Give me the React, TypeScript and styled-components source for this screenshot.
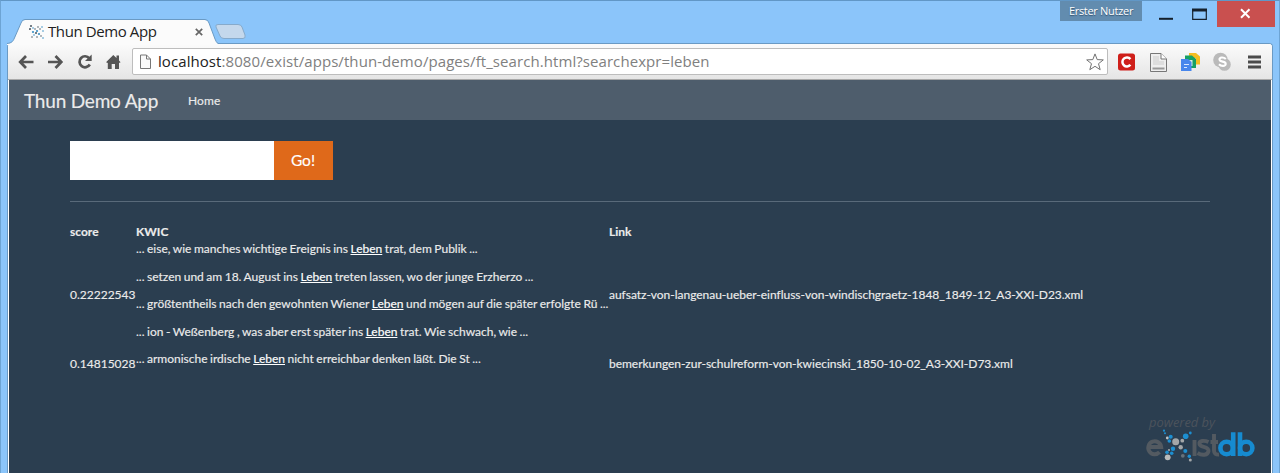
import React from 'react';
import styled, { createGlobalStyle } from 'styled-components';

const GlobalStyle = createGlobalStyle`
  * { box-sizing: border-box; }
  body { margin: 0; overflow: hidden; background: #8bc5fa; }
`;

const Window = styled.div`
  width: 1280px;
  height: 473px;
  display: flex;
  flex-direction: column;
  background: #8bc5fa;
  border-top: 1px solid #6197c6;
  border-left: 1px solid #6da4d4;
  border-right: 1px solid #6da4d4;
  font-family: 'Open Sans', sans-serif;
`;

const TitleBar = styled.header`
  height: 42px;
  flex: none;
  display: flex;
  justify-content: space-between;
  align-items: flex-start;
`;

const TabStrip = styled.div`
  display: flex;
  padding: 18px 0 0 6px;
`;

const Tab = styled.div`
  position: relative;
  width: 211px;
  height: 26px;
  display: flex;
  align-items: center;
  padding-left: 22px;
`;

const TabShape = styled.svg`
  position: absolute;
  left: 0;
  top: 0;
`;

const TabContent = styled.div`
  position: relative;
  display: flex;
  align-items: center;
  width: 176px;
  svg { flex: none; }
`;

const TabTitle = styled.span`
  margin-left: 3px;
  width: 147px;
  color: #222;
  font-size: 15px;
  line-height: 20px;
  letter-spacing: -0.4px;
  padding-bottom: 2px;
  white-space: nowrap;
`;

const NewTab = styled.svg`
  margin: 4px 0 0 -4px;
`;

const Controls = styled.div`
  display: flex;
`;

const UserBadge = styled.span`
  width: 82px;
  height: 20px;
  background: #628caf;
  color: #fff;
  font-size: 11px;
  line-height: 20px;
  text-align: center;
  letter-spacing: -0.3px;
  text-shadow: 0 1px 1px #35536f;
`;

const WindowButtons = styled.svg`
  display: block;
`;

const Frame = styled.div`
  flex: 1;
  min-height: 0;
  margin: 0 6px;
  display: flex;
  flex-direction: column;
  border: 1px solid #6a9ac4;
  border-bottom: 0;
  border-radius: 4px 4px 0 0;
  background: #fff;
  overflow: hidden;
`;

const Toolbar = styled.div`
  height: 36px;
  flex: none;
  display: flex;
  align-items: center;
  background: linear-gradient(#fbfbfb, #e5e5e5);
  border-bottom: 1px solid #a9a9a9;
`;

const NavIcons = styled.svg`
  width: 124px;
  height: 34px;
  flex: none;
`;

const AddressBar = styled.div`
  width: 976px;
  height: 27px;
  display: flex;
  align-items: center;
  flex: none;
  background: #fff;
  border: 1px solid #bdbdbd;
  border-radius: 2px;
  padding: 0 3px 0 6px;
`;

const Url = styled.span`
  flex: 1;
  margin-left: 6px;
  padding-bottom: 2px;
  color: #808080;
  font-size: 15px;
  line-height: 22px;
  letter-spacing: 0.075px;
  white-space: nowrap;
  b { color: #222; font-weight: 400; }
`;

const Extensions = styled.svg`
  width: 156px;
  height: 34px;
  flex: none;
`;

const Page = styled.div`
  flex: 1;
  min-height: 0;
  margin: 0 1px;
  display: flex;
  flex-direction: column;
  background: #2b3e50;
  color: #ebebeb;
  font-family: Lato, sans-serif;
  font-size: 12px;
  line-height: 1.42857;
  font-variant-ligatures: none;
  -webkit-text-stroke: 0.15px;
`;

const Navbar = styled.nav`
  height: 40px;
  flex: none;
  display: flex;
  align-items: center;
  background: #4e5d6c;
  padding: 2px 0 0 15px;
`;

const Brand = styled.a`
  width: 164px;
  font-size: 19px;
  line-height: 21px;
  padding-bottom: 2px;
  letter-spacing: -0.2px;
`;

const NavLink = styled.a`
  font-size: 12px;
  letter-spacing: 0.1px;
`;

const Main = styled.main`
  padding: 21px 61px 0;
`;

const SearchForm = styled.form`
  display: flex;
  height: 39px;
`;

const SearchInput = styled.input`
  width: 204px;
  border: 0;
  background: #fff;
`;

const GoButton = styled.button`
  width: 59px;
  border: 0;
  padding: 0 1px 1px 0;
  background: #df691a;
  color: #fff;
  font: 15.5px Lato, sans-serif;
`;

const Rule = styled.hr`
  margin: 21px 0;
  border: 0;
  border-top: 1px solid #596a7a;
`;

const Results = styled.table`
  border-collapse: collapse;
  table-layout: fixed;
  width: 1140px;
  td, th { padding: 0; text-align: left; white-space: nowrap; }
`;

const Col = styled.col<{ $w: number }>`
  width: ${(p) => p.$w}px;
`;

const Cell = styled.td`
  && { padding-bottom: 1px; }
`;

const Snippet = styled.p`
  margin: 0 0 10.35px;
  word-spacing: -0.55px;
  a { color: #fff; text-decoration: underline; }
`;

const DocumentLink = styled.a`
  letter-spacing: -0.025px;
`;

const Footer = styled.footer`
  margin-top: auto;
  display: flex;
  justify-content: flex-end;
  padding: 0 16px 8px 0;
`;

const Logo = styled.svg`
  overflow: visible;
  font-family: 'Open Sans', sans-serif;
`;

type Hit = [before: string, after: string];
const results: { score: string; link: string; hits: Hit[] }[] = [
  {
    score: '0.22222543',
    link: 'aufsatz-von-langenau-ueber-einfluss-von-windischgraetz-1848_1849-12_A3-XXI-D23.xml',
    hits: [
      ['eise, wie manches wichtige Ereignis ins', 'trat, dem Publik'],
      ['setzen und am 18. August ins', 'treten lassen, wo der junge Erzherzo'],
      ['größtentheils nach den gewohnten Wiener', 'und mögen auf die später erfolgte Rü'],
      ['ion - Weßenberg , was aber erst später ins', 'trat. Wie schwach, wie'],
    ],
  },
  {
    score: '0.14815028',
    link: 'bemerkungen-zur-schulreform-von-kwiecinski_1850-10-02_A3-XXI-D73.xml',
    hits: [['armonische irdische', 'nicht erreichbar denken läßt. Die St']],
  },
];

const G = '#a3a7a9';
const B = '#1d8fd1';
const dots: [number, number, number, string][] = [
  [17, 13.7, 1.1, B], [18, 16.3, 1, B], [23.7, 19.7, 2, B], [20.3, 21, 1.4, '#c0c4c6'],
  [22.3, 24, 1.8, B], [28.7, 24.7, 3.5, G], [35.3, 23.7, 1.9, G], [38.7, 19.3, 2.8, B],
  [43.3, 16, 1.4, B], [33.7, 30.3, 2.2, G], [26, 31.7, 2.2, B], [22, 33, 1.1, G], [20, 35.3, 1.8, B],
  [24.7, 36.3, 1.8, B], [20.7, 40.3, 2.9, '#b9bbbb'], [38.3, 34, 2, B], [35.8, 38.8, 1.9, '#66727c'],
  [42.3, 39.3, 1.7, B], [43.3, 43, 1.5, G],
];

const favDots: [number, number][] = [
  [2, 2], [4, 4], [6, 5], [8, 7], [11, 5], [13, 3], [7, 9], [5, 11], [3, 13],
  [10, 10], [12, 12], [14, 14], [1, 5], [14, 7], [9, 3], [4, 8], [8, 13],
];

function Favicon() {
  return (
    <svg width="16" height="16">
      {favDots.map(([x, y], i) => (
        <circle key={i} cx={x} cy={y} r={i % 3 ? 0.8 : 1.1} fill={i % 2 ? '#3a8fc4' : '#56616a'} />
      ))}
    </svg>
  );
}

function ExistLogo() {
  return (
    <Logo width="108" height="48">
      <text x="2" y="10" fontSize="12" fontStyle="italic" fill="#4b535c" textLength="66" lengthAdjust="spacingAndGlyphs">powered by</text>
      <g fill="none" stroke="#535a61" strokeWidth="3.9">
        <path d="M1.8 30H14.2A6.5 6.5 0 1 0 12.5 35.2" />
        <path d="M47.5 23V39" />
        <path d="M61.5 25.1C57 22.9 52 23.7 52.5 27C53 31 62 28.5 61.5 34C61 38.5 55 38.8 50.5 36" />
        <path d="M67 17V33.5Q67 37.9 72 37.6M63.5 25H71" />
      </g>
      <g fill="none" stroke="#168bd0" strokeWidth="4.6">
        <circle cx="79.6" cy="31" r="6.2" />
        <path d="M86.2 15.3V39M93 15.3V39" />
        <circle cx="99.2" cy="31" r="6.2" />
      </g>
      {dots.map(([x, y, r, c], i) => <circle key={i} cx={x} cy={y} r={r} fill={c} />)}
    </Logo>
  );
}

export default function App() {
  return (
    <Window>
      <GlobalStyle />
      <TitleBar>
        <TabStrip>
          <Tab>
            <TabShape width="211" height="26">
              <path d="M0 25C5 24 6 22 7 20L14 4Q15 1 18 1H198Q201 1 202 4L208 20Q209 23 211 25V26H0Z" fill="#fbfbfb" />
              <path d="M0 24.5C5 24 6 22 7 20L14 4Q15 .5 18 .5H198Q201 .5 202 4L208 20Q209 23 211 24.5" fill="none" stroke="#6a9ac4" />
            </TabShape>
            <TabContent>
              <Favicon />
              <TabTitle>Thun Demo App</TabTitle>
              <svg width="8" height="8"><path d="M.8.8 7.2 7.2M7.2.8.8 7.2" stroke="#666" strokeWidth="1.7" /></svg>
            </TabContent>
          </Tab>
          <NewTab width="34" height="18">
            <path d="M4 1.5H24Q27 1.5 28 4L31 12Q32 15.5 29 15.5H10Q7 15.5 6 13L2 4Q1 1.5 4 1.5Z" fill="#c4d8ec" stroke="#86aacb" />
          </NewTab>
        </TabStrip>
        <Controls>
          <UserBadge>Erster Nutzer</UserBadge>
          <WindowButtons width="137" height="28">
            <path d="M17 17.8H31" stroke="#14202c" strokeWidth="2" />
            <path d="M50.7 8V18.3H64.3V8" fill="none" stroke="#14202c" strokeWidth="1.2" />
            <path d="M50 9H65" stroke="#14202c" strokeWidth="3" />
            <path d="M75 0H133V26H75Z" fill="#c9504f" />
            <path d="M99 8.3 107.5 16.8M107.5 8.3 99 16.8" stroke="#fff" strokeWidth="2" />
          </WindowButtons>
        </Controls>
      </TitleBar>
      <Frame>
        <Toolbar>
          <NavIcons viewBox="0 0 124 34" fill="none" stroke="#555" strokeWidth="2.7">
            <path d="M12.5 17H25.5M18 11 12.2 17 18 23M40 17H53M47.5 11 53.3 17 47.5 23" />
            <path d="M81.3 13.3A5.5 5.5 0 1 0 81.8 19.5" />
            <path d="M83.7 9.5V16H77Z" fill="#555" stroke="none" />
            <path d="M98 17.2 105.3 10 108.5 13V10.5H111V15.5L112.6 17.2 111 18V24H107V19H103.7V24H99.8V18Z" fill="#555" stroke="none" />
          </NavIcons>
          <AddressBar>
            <svg width="13" height="16"><path d="M1.5 1H7.5L11.5 5V14.5H1.5ZM7.5 1V5H11.5" fill="#fafafa" stroke="#777" /></svg>
            <Url><b>localhost</b>:8080/exist/apps/thun-demo/pages/ft_search.html?searchexpr=leben</Url>
            <svg width="18" height="18"><path d="M9 .9 11.2 6.6 17.3 6.9 12.5 10.7 14.2 16.7 9 13.3 3.8 16.7 5.5 10.7.7 6.9 6.8 6.6Z" fill="#fff" stroke="#727272" strokeLinejoin="round" /></svg>
          </AddressBar>
          <Extensions viewBox="0 0 156 34">
            <rect x="10" y="8.5" width="17" height="17" rx="2.5" fill="#cf1f1a" />
            <path d="M22.4 14.1A4.5 4.5 0 1 0 22.4 19.8" fill="none" stroke="#fff" strokeWidth="2.5" />
            <path d="M42.5 8.5H53L58.5 14V26.5H42.5Z" fill="#eee" stroke="#777" />
            <path d="M53 8.5V14H58.5" fill="#fff" stroke="#777" />
            <path d="M45 11H51V16H56V20H45Z" fill="#ddd" />
            <path d="M44.5 22.5H56.5V24.5H44.5Z" fill="#999" />
            <path d="M81 8H88L92 11.5V19.5H81Z" fill="#f4bd21" />
            <path d="M83 13H88V19H83Z" fill="#eee3ad" />
            <path d="M77 10.5H84L88 14V23H77Z" fill="#16a063" />
            <path d="M79 15H84.5V21H79Z" fill="#d1eade" />
            <path d="M73 14H80L83.5 17V26H73Z" fill="#4786ec" />
            <path d="M76 19.5H81M76 22.5H79" stroke="#d7e6ff" />
            <circle cx="112.5" cy="15" r="7.3" fill="#bababa" />
            <circle cx="116.5" cy="19.5" r="6.3" fill="#bababa" />
            <path d="M117.8 14C115.5 11.8 111 12.1 111.5 14.7C112 17.3 117.9 16 117.7 19C117.5 21.5 113 21.5 111 19.3" fill="none" stroke="#fff" strokeWidth="2.1" />
            <path d="M140 12H153M140 17H153M140 22H153" stroke="#4b4b4b" strokeWidth="2.8" />
          </Extensions>
        </Toolbar>
        <Page>
          <Navbar>
            <Brand>Thun Demo App</Brand>
            <NavLink>Home</NavLink>
          </Navbar>
          <Main>
            <SearchForm>
              <SearchInput aria-label="searchexpr" />
              <GoButton type="button">Go!</GoButton>
            </SearchForm>
            <Rule />
            <Results>
              <colgroup><Col $w={66} /><Col $w={473} /><Col $w={601} /></colgroup>
              <thead><tr><th>score</th><th>KWIC</th><th>Link</th></tr></thead>
              <tbody>
                {results.map((r) => (
                  <tr key={r.score}>
                    <Cell>{r.score}</Cell>
                    <td>
                      {r.hits.map(([before, after]) => (
                        <Snippet key={before}>... {before} <a>Leben</a> {after} ...</Snippet>
                      ))}
                    </td>
                    <Cell><DocumentLink>{r.link}</DocumentLink></Cell>
                  </tr>
                ))}
              </tbody>
            </Results>
          </Main>
          <Footer><ExistLogo /></Footer>
        </Page>
      </Frame>
    </Window>
  );
}
